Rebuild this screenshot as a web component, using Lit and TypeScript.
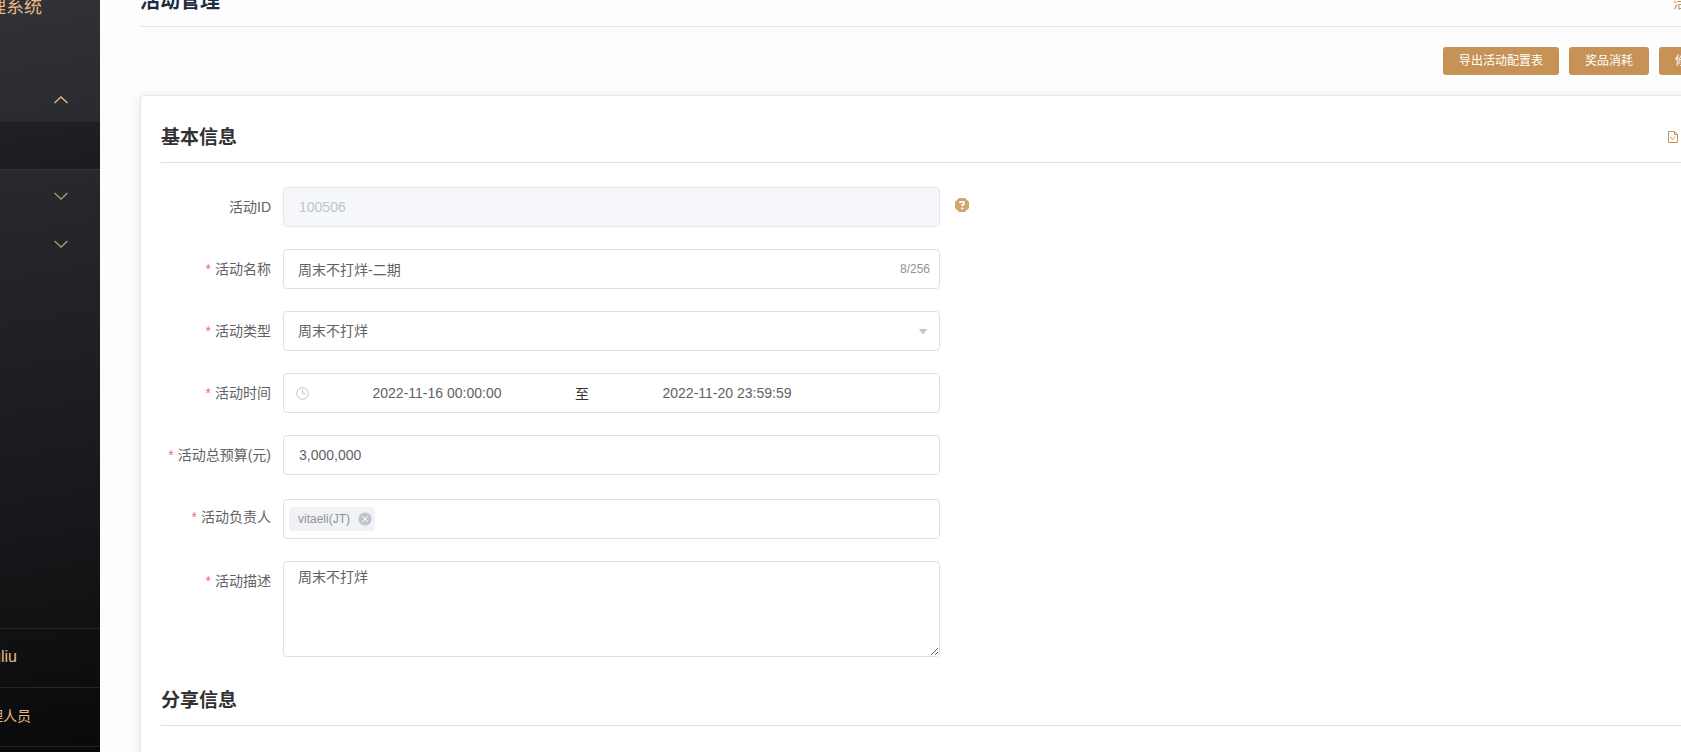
import { LitElement, html, css, svg } from "lit";
import { customElement } from "lit/decorators.js";

const field = (id: string, text: string, control: unknown, required = true) => html`
  <div class="item">
    <label class="label" for=${id}>${required ? html`<span class="star">*</span>` : null}${text}</label>
    ${control}
  </div>
`;

const chevron = (up: boolean) => svg`
  <svg class="chevron" viewBox="0 0 14 8" width="14" height="8" aria-hidden="true">
    <path d=${up ? "M0.5 7 L7 1 L13.5 7" : "M0.5 1 L7 7 L13.5 1"} fill="none" stroke="currentColor" stroke-width="1.3"/>
  </svg>`;

@customElement("side-bar")
class SideBar extends LitElement {
  static styles = css`
    :host {
      display: flex;
      flex-direction: column;
      width: 100px;
      flex: none;
      overflow: hidden;
      box-sizing: border-box;
      background: linear-gradient(170deg, #303237 0%, #25262b 30%, #17181b 68%, #09090a 100%);
      color: #e6b985;
      font-family: "Liberation Sans", "Noto Sans CJK SC", sans-serif;
    }
    .brand {
      display: flex;
      justify-content: flex-end;
      align-items: flex-end;
      height: 20px;
      padding-right: 58px;
      margin-bottom: 54px;
      font-size: 18px;
      line-height: 26px;
      white-space: nowrap;
    }
    .nav { flex: 1; }
    .group {
      display: flex;
      align-items: center;
      justify-content: flex-end;
      width: 100%;
      height: 48px;
      padding: 0 32px 0 0;
      border: 0;
      background: none;
      color: #b3936d;
    }
    .group.open { padding-top: 4px; color: #e6b985; }
    .sub {
      height: 48px;
      box-sizing: border-box;
      border-bottom: 1px solid #3a3231;
      background: linear-gradient(170deg, #202125, #1b1c1e);
      margin-bottom: 2px;
    }
    .row {
      display: flex;
      justify-content: flex-end;
      align-items: center;
      height: 56px;
      padding-bottom: 2px;
      border-top: 1px solid #2a2523;
      white-space: nowrap;
    }
    .user { padding-right: 83px; font-size: 16px; line-height: 20px; }
    .role { padding-right: 69px; font-size: 14px; line-height: 20px; }
    .foot { height: 5px; border-top: 1px solid #2a2120; }
  `;
  render() {
    return html`
      <div class="brand">管理系统</div>
      <nav class="nav">
        <button class="group open" aria-label="收起">${chevron(true)}</button>
        <div class="sub"></div>
        <button class="group" aria-label="展开">${chevron(false)}</button>
        <button class="group" aria-label="展开">${chevron(false)}</button>
      </nav>
      <div class="row user">gliu</div>
      <div class="row role">管理人员</div>
      <div class="foot"></div>
    `;
  }
}

@customElement("app-root")
class AppRoot extends LitElement {
  static styles = css`
    :host {
      display: flex;
      height: 100vh;
      overflow: hidden;
      background: #fdfdfd;
      font-family: "Liberation Sans", "Noto Sans CJK SC", sans-serif;
      font-size: 14px;
      color: #606266;
    }
    * { box-sizing: border-box; }
    input, select, textarea, button { font: inherit; color: inherit; }
    .main {
      flex: none;
      width: calc(100% - 22px);
      padding-left: 40px;
    }
    .head {
      display: flex;
      justify-content: space-between;
      align-items: flex-end;
      height: 27px;
      padding-bottom: 10px;
      border-bottom: 1px solid #e6e6ea;
    }
    .title { margin: 0; font-size: 20px; line-height: 30px; color: #1f2a44; }
    .link { width: 86px; line-height: 26px; color: #c69255; text-decoration: none; }
    .actions {
      display: flex;
      justify-content: flex-end;
      gap: 10px;
      margin: 20px 20px 20px 0;
    }
    .btn {
      height: 28px;
      padding: 0 16px;
      border: 0;
      border-radius: 3px;
      background: #c69255;
      color: #fff;
      font-size: 12px;
      line-height: 28px;
    }
    .card {
      padding: 20px;
      border: 1px solid #e4e6ee;
      border-radius: 4px;
      background: #fff;
      box-shadow: 0 2px 12px rgba(0, 0, 0, 0.1);
    }
    .sec {
      display: flex;
      align-items: center;
      justify-content: space-between;
      height: 47px;
      padding-bottom: 3px;
      margin-bottom: 24px;
      border-bottom: 1px solid #dcdee8;
    }
    .sec h2 { margin: 0; font-size: 19px; line-height: 28px; color: #303133; }
    .sec .export { width: 70px; height: 14px; padding: 0; border: 0; background: none; color: #c69255; display: flex; }
    .item { display: flex; margin-bottom: 22px; }
    .label {
      flex: none;
      width: 110px;
      margin-right: 12px;
      text-align: right;
      line-height: 40px;
    }
    .star { color: #f56c6c; margin-right: 4px; }
    .box {
      display: flex;
      align-items: center;
      width: 657px;
      height: 40px;
      border: 1px solid #dcdfe6;
      border-radius: 4px;
      background: #fff;
    }
    input.box { padding: 0 15px; }
    input:disabled { background: #f5f7fa; border-color: #e4e7ed; color: #c0c4cc; }
    .bare { flex: 1; min-width: 0; height: 38px; border: 0; padding: 0; background: none; outline: 0; }
    .named { padding: 0 9px 0 14px; }
    .count { font-size: 12px; color: #909399; }
    .pick { padding: 0 12px 0 14px; }
    .pick select { appearance: none; }
    .time { padding: 0 84px 0 12px; }
    .time .bare { text-align: center; }
    .to { width: 34px; text-align: center; color: #303133; }
    .late { padding-top: 2px; }
    .tags { padding-left: 5px; gap: 8px; }
    .tag {
      display: flex;
      align-items: center;
      gap: 8px;
      height: 24px;
      padding: 0 3px 0 9px;
      border-radius: 4px;
      background: #f0f2f5;
      color: #909399;
      font-size: 12px;
    }
    .close { display: flex; padding: 0; border: 0; background: none; }
    .area {
      display: block;
      width: 657px;
      height: 96px;
      padding: 5px 14px;
      border: 1px solid #dcdfe6;
      border-radius: 4px;
      line-height: 21px;
      resize: vertical;
    }
    .help { margin: 10px 0 0 15px; width: 16px; height: 16px; padding: 0; border: 0; background: none; }
    svg { display: block; flex: none; }
  `;
  render() {
    return html`
      <side-bar></side-bar>
      <main class="main">
        <header class="head">
          <h1 class="title">活动管理</h1>
          <a class="link" href="#">活动</a>
        </header>
        <div class="actions">
          <button class="btn">导出活动配置表</button>
          <button class="btn">奖品消耗</button>
          <button class="btn">修改记录</button>
        </div>
        <section class="card">
          <div class="sec">
            <h2>基本信息</h2>
            <button class="export" aria-label="导出">
              <svg width="10" height="12" viewBox="0 0 10 12">
                <path d="M.5.5H6.5L9.5 3.5V11.5H.5ZM6.5.5V3.5H9.5" fill="none" stroke="currentColor"/>
                <path d="M2.5 6L4.5 8.5L7.5 5.5" fill="none" stroke="currentColor"/>
              </svg>
            </button>
          </div>
          ${field("aid", "活动ID", html`
            <input id="aid" class="box" disabled value="100506" />
            <button class="help" aria-label="帮助">
              <svg width="14" height="14" viewBox="0 0 14 14">
                <path d="M4 0H10L14 4V10L10 14H4L0 10V4Z" fill="#cfa570"/>
                <path d="M5 5.2V3.8H9V6.5H7.2V8.5M6 10.5H8.2" fill="none" stroke="#fff" stroke-width="1.4"/>
              </svg>
            </button>`, false)}
          ${field("name", "活动名称", html`
            <div class="box named"><input id="name" class="bare" value="周末不打烊-二期" /><span class="count">8/256</span></div>`)}
          ${field("type", "活动类型", html`
            <div class="box pick">
              <select id="type" class="bare"><option>周末不打烊</option></select>
              <svg width="8" height="5" viewBox="0 0 8 5"><path d="M0 0H8L4.5 5H3.5Z" fill="#c0c4cc"/></svg>
            </div>`)}
          ${field("time", "活动时间", html`
            <div class="box time">
              <svg width="13" height="13" viewBox="0 0 13 13" fill="none" stroke="#c0c4cc">
                <circle cx="6.5" cy="6.5" r="5.8"/><path d="M6.5 2.5V6.5H10"/>
              </svg>
              <input id="time" class="bare" value="2022-11-16 00:00:00" />
              <span class="to">至</span>
              <input class="bare" aria-label="结束时间" value="2022-11-20 23:59:59" />
            </div>`)}
          ${field("budget", "活动总预算(元)", html`<input id="budget" class="box" value="3,000,000" />`)}
          ${field("owner", "活动负责人", html`
            <div class="late"><div class="box tags">
              <span class="tag">vitaeli(JT)
                <button class="close" aria-label="移除">
                  <svg width="14" height="14" viewBox="0 0 14 14"><circle cx="7" cy="7" r="6.6" fill="#c0c4cc"/>
                    <path d="M4 4L10 10M10 4L4 10" stroke="#fff" fill="none"/></svg>
                </button>
              </span>
              <input id="owner" class="bare" />
            </div></div>`)}
          ${field("desc", "活动描述", html`<textarea id="desc" class="area">周末不打烊</textarea>`)}
          <div class="sec"><h2>分享信息</h2></div>
        </section>
      </main>
    `;
  }
}
